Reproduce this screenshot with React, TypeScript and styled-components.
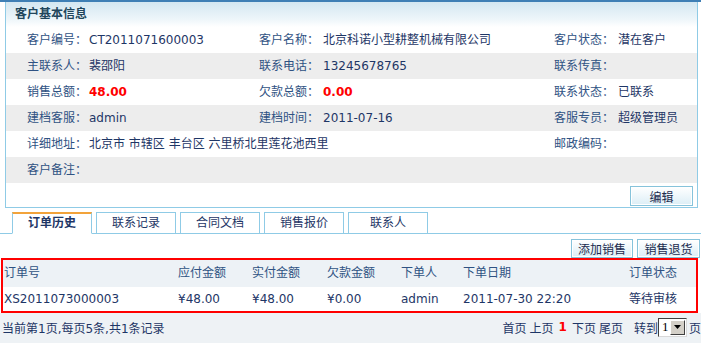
import React from "react";
import styled, { createGlobalStyle } from "styled-components";

const GlobalStyle = createGlobalStyle`
  html, body {
    margin: 0;
    padding: 0;
    background: #fff;
  }
  body {
    font-family: "DejaVu Sans", "Noto Sans CJK SC", sans-serif;
    font-size: 12px;
    color: #1e3666;
  }
`;

const Page = styled.div`
  width: 701px;
  height: 343px;
  overflow: hidden;
`;

const TopLine = styled.div`
  height: 2px;
  background: #3f7fb5;
`;

const Panel = styled.div`
  margin: 0 3px 0 5px;
  border: 1px solid #8fcbe6;
  border-top: none;
`;

const PanelHeader = styled.div`
  height: 25px;
  line-height: 25px;
  padding-left: 9px;
  font-weight: bold;
  color: #21465c;
  background: linear-gradient(#d4e7f1, #eef6fa 70%, #ffffff);
`;

const InfoRow = styled.div<{ $shade?: boolean }>`
  display: grid;
  grid-template-columns: 62px 170px 64px 231px 64px 1fr;
  height: 26px;
  line-height: 26px;
  padding-left: 21px;
  background: ${(p) => (p.$shade ? "#ededed" : "#ffffff")};
  white-space: nowrap;
`;

const Label = styled.span`
  color: #2f5283;
`;

const Value = styled.span<{ $money?: boolean }>`
  color: ${(p) => (p.$money ? "#ff0000" : "#1e3666")};
  font-weight: ${(p) => (p.$money ? "bold" : "normal")};
  overflow: visible;
`;

const ButtonRow = styled.div`
  height: 24px;
  display: flex;
  justify-content: flex-end;
  align-items: flex-start;
  padding: 3px 4px 0 0;
  box-sizing: border-box;
`;

const Button = styled.button`
  height: 20px;
  width: 63px;
  padding: 0;
  border: 1px solid #86c3db;
  box-shadow: inset 0 0 0 1px #ffffff;
  background: linear-gradient(#ffffff, #dceef6);
  font: inherit;
  color: #1b2c4f;
  cursor: pointer;
`;

const TabStrip = styled.div`
  margin-top: 4px;
  height: 21px;
  display: flex;
  gap: 4px;
  padding-left: 12px;
  border-bottom: 1px solid #8fcbe6;
`;

const Tab = styled.div<{ $active?: boolean }>`
  box-sizing: border-box;
  width: 80px;
  height: 22px;
  margin-bottom: -1px;
  text-align: center;
  background: #fff;
  border: 1px solid #8fcbe6;
  border-top: ${(p) => (p.$active ? "2px solid #f2a33a" : "1px solid #8fcbe6")};
  border-bottom: ${(p) => (p.$active ? "1px solid #fff" : "1px solid #8fcbe6")};
  line-height: ${(p) => (p.$active ? "19px" : "20px")};
  font-weight: ${(p) => (p.$active ? "bold" : "normal")};
  color: #1e3666;
`;

const Toolbar = styled.div`
  height: 24px;
  display: flex;
  justify-content: flex-end;
  gap: 4px;
  padding: 5px 1px 0 0;
  box-sizing: border-box;
`;

const ToolButton = styled(Button)`
  height: 19px;
  width: 62px;
`;

const OrderTable = styled.div`
  margin: 0 3px 0 1px;
  border: 2px solid #ff0000;
`;

const OrderRow = styled.div<{ $head?: boolean }>`
  display: grid;
  grid-template-columns: 174px 74px 75px 74px 62px 166px 1fr;
  height: ${(p) => (p.$head ? "27px" : "24px")};
  line-height: ${(p) => (p.$head ? "27px" : "24px")};
  background: ${(p) => (p.$head ? "#edf2f6" : "#ffffff")};
  color: ${(p) => (p.$head ? "#2f5283" : "#1e3666")};
  white-space: nowrap;
`;

const Cell = styled.span`
  padding-left: 1px;
`;

const Footer = styled.div`
  height: 30px;
  display: flex;
  justify-content: space-between;
  align-items: center;
  padding: 0 0 2px 2px;
  box-sizing: border-box;
  background: #eef2f5;
  color: #1e3666;
  white-space: nowrap;
`;

const Pager = styled.div`
  display: flex;
  align-items: center;
`;

const PageLink = styled.span<{ $gap?: number }>`
  margin-left: ${(p) => p.$gap ?? 3}px;
`;

const Current = styled.span`
  margin-left: 5px;
  color: #ff0000;
  font-weight: bold;
`;

const FakeSelect = styled.span`
  display: inline-flex;
  align-items: center;
  justify-content: space-between;
  box-sizing: border-box;
  width: 29px;
  height: 19px;
  margin-left: 0;
  border: 1px solid;
  border-color: #404040 #d8d8d8 #d8d8d8 #404040;
  background: #fff;
  font-family: "Liberation Serif", serif;
  font-size: 13px;
  color: #000;
  padding-left: 3px;
`;

const Arrow = styled.span`
  display: flex;
  align-items: center;
  justify-content: center;
  width: 15px;
  height: 15px;
  margin-right: 1px;
  background: #d4d0c8;
  border: 1px solid;
  border-color: #fff #404040 #404040 #fff;
  box-sizing: border-box;
`;

const infoRows: [string, string, string, string, string, string, boolean?][] = [
  ["客户编号：", "CT2011071600003", "客户名称：", "北京科诺小型耕整机械有限公司", "客户状态：", "潜在客户"],
  ["主联系人：", "裴邵阳", "联系电话：", "13245678765", "联系传真：", ""],
  ["销售总额：", "48.00", "欠款总额：", "0.00", "联系状态：", "已联系", true],
  ["建档客服：", "admin", "建档时间：", "2011-07-16", "客服专员：", "超级管理员"],
  ["详细地址：", "北京市 市辖区 丰台区 六里桥北里莲花池西里", "", "", "邮政编码：", ""],
  ["客户备注：", "", "", "", "", ""],
];

const tabs = ["订单历史", "联系记录", "合同文档", "销售报价", "联系人"];

const orderHead = ["订单号", "应付金额", "实付金额", "欠款金额", "下单人", "下单日期", "订单状态"];
const orders = [
  ["XS2011073000003", "¥48.00", "¥48.00", "¥0.00", "admin", "2011-07-30 22:20", "等待审核"],
];

const App: React.FC = () => {
  return (
    <Page>
      <GlobalStyle />
      <TopLine />
      <Panel>
        <PanelHeader>客户基本信息</PanelHeader>
        {infoRows.map((r, i) => (
          <InfoRow key={i} $shade={i % 2 === 1}>
            <Label>{r[0]}</Label>
            <Value $money={r[6]}>{r[1]}</Value>
            <Label>{r[2]}</Label>
            <Value $money={r[6]}>{r[3]}</Value>
            <Label>{r[4]}</Label>
            <Value>{r[5]}</Value>
          </InfoRow>
        ))}
        <ButtonRow>
          <Button type="button">编辑</Button>
        </ButtonRow>
      </Panel>

      <TabStrip>
        {tabs.map((t, i) => (
          <Tab key={t} $active={i === 0}>
            {t}
          </Tab>
        ))}
      </TabStrip>

      <Toolbar>
        <ToolButton type="button">添加销售</ToolButton>
        <ToolButton type="button" style={{ width: 63 }}>销售退货</ToolButton>
      </Toolbar>

      <OrderTable>
        <OrderRow $head>
          {orderHead.map((h) => (
            <Cell key={h}>{h}</Cell>
          ))}
        </OrderRow>
        {orders.map((o) => (
          <OrderRow key={o[0]}>
            {o.map((c, j) => (
              <Cell key={j}>{c}</Cell>
            ))}
          </OrderRow>
        ))}
      </OrderTable>

      <Footer>
        <span>当前第1页,每页5条,共1条记录</span>
        <Pager>
          <PageLink $gap={0}>首页</PageLink>
          <PageLink>上页</PageLink>
          <Current>1</Current>
          <PageLink $gap={5}>下页</PageLink>
          <PageLink>尾页</PageLink>
          <PageLink $gap={11}>转到</PageLink>
          <FakeSelect>
            1
            <Arrow>
              <svg width="7" height="4" viewBox="0 0 7 4">
                <path d="M0 0h7L3.5 4z" fill="#000" />
              </svg>
            </Arrow>
          </FakeSelect>
          <PageLink $gap={2}>页</PageLink>
        </Pager>
      </Footer>
    </Page>
  );
};

export default App;
